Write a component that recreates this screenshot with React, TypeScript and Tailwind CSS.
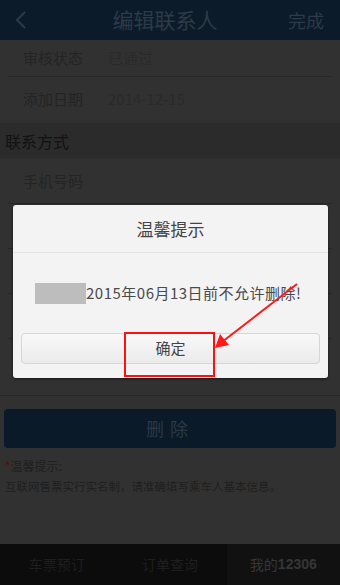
import React from "react";

const font = { fontFamily: '"Noto Sans CJK SC", "Noto Sans", sans-serif' };

function Row({ label, value, border = true, h = "h-[45px]" }: { label: string; value?: string; border?: boolean; h?: string }) {
  return (
    <div className={`${h} mx-[8px] flex items-center ${border ? "border-b border-[#272727]" : ""}`}>
      <span className="w-[100px] pl-[15px] text-[15px] text-[#242424]">{label}</span>
      <span className="text-[15px] text-[#2a2a2a]">{value}</span>
    </div>
  );
}

export default function App() {
  return (
    <div className="relative w-[340px] h-[585px] overflow-hidden bg-[#313131] flex flex-col" style={font}>
      {/* header */}
      <div className="h-[40px] bg-[#0c1b2a] flex items-center justify-between px-[12px] shrink-0">
        <svg width="14" height="22" viewBox="0 0 14 22" className="ml-[2px]">
          <path d="M11 3 L3 11 L11 19" stroke="#2d3a47" strokeWidth="2" fill="none" />
        </svg>
        <span className="text-[21px] text-[#2d3a47] ml-[14px]">编辑联系人</span>
        <span className="text-[18px] text-[#2d3a47] mr-[4px]">完成</span>
      </div>

      <Row label="审核状态" value="已通过" h="h-[37px]" />
      <Row label="添加日期" value="2014-12-15" border={false} />
      <div className="h-[37px] bg-[#2b2b2b] flex items-center px-[5px] text-[16px] text-[#121212] border-y border-[#2e2e2e]">
        联系方式
      </div>
      <div className="h-[237px] border-b border-[#272727] shrink-0">
        <Row label="手机号码" />
        <Row label="固定电话" />
        <Row label="电子邮件" />
        <Row label="地址" />
      </div>

      <div className="mt-[13px] mx-[4px] h-[39px] rounded-[4px] bg-[#0a1a28] flex items-center justify-center text-[18px] text-[#2b3844] tracking-[6px]">
        删除
      </div>
      <div className="mt-[8px] px-[5px] text-[12px] text-[#1f1f1f] leading-[20px]">
        <span className="text-[#5c0a0a]">*</span>温馨提示:
      </div>
      <div className="px-[5px] text-[11.5px] text-[#1f1f1f] leading-[20px]">
        互联网售票实行实名制，请准确填写乘车人基本信息。
      </div>

      <div className="mt-auto h-[41px] bg-[#0c0c0c] grid grid-cols-3 text-[14px]">
        <div className="flex items-center justify-center text-[#1e1e1e]">车票预订</div>
        <div className="flex items-center justify-center text-[#1e1e1e]">订单查询</div>
        <div className="flex items-center justify-center bg-[#111111] text-[#363636]">
          我的<span className="font-bold" style={{ fontFamily: '"Liberation Sans", sans-serif' }}>12306</span>
        </div>
      </div>

      {/* dialog */}
      <div className="absolute left-[13px] top-[205px] w-[315px] h-[173px] bg-[#f3f3f3] rounded-[3px] shadow-[0_1px_3px_rgba(0,0,0,0.5)] flex flex-col">
        <div className="h-[48px] border-b border-[#e2e2e2] flex items-center justify-center text-[17px] text-[#444444]">
          温馨提示
        </div>
        <div className="h-[80px] flex items-center pl-[22px] text-[15px] text-[#4a4a4a]">
          <span className="w-[51px] h-[21px] bg-[#bdbdbd] inline-block" />
          <span className="tracking-[0.5px]">2015年06月13日前不允许删除!</span>
        </div>
        <div className="mx-[8px] h-[31px] rounded-[4px] border border-[#d6d6d6] bg-gradient-to-b from-[#f8f8f8] to-[#ebebeb] flex items-center justify-center text-[15px] text-[#444444]">
          确定
        </div>
      </div>

      {/* annotation */}
      <div className="absolute left-[124px] top-[332px] w-[91px] h-[45px] border-2 border-[#ff1010]" />
      <svg className="absolute left-0 top-0" width="340" height="585" viewBox="0 0 340 585">
        <line x1="297" y1="284" x2="222" y2="342" stroke="#ff1a1a" strokeWidth="2" />
        <polygon points="215,348 220,334 229,345" fill="#ff1a1a" />
      </svg>
    </div>
  );
}
